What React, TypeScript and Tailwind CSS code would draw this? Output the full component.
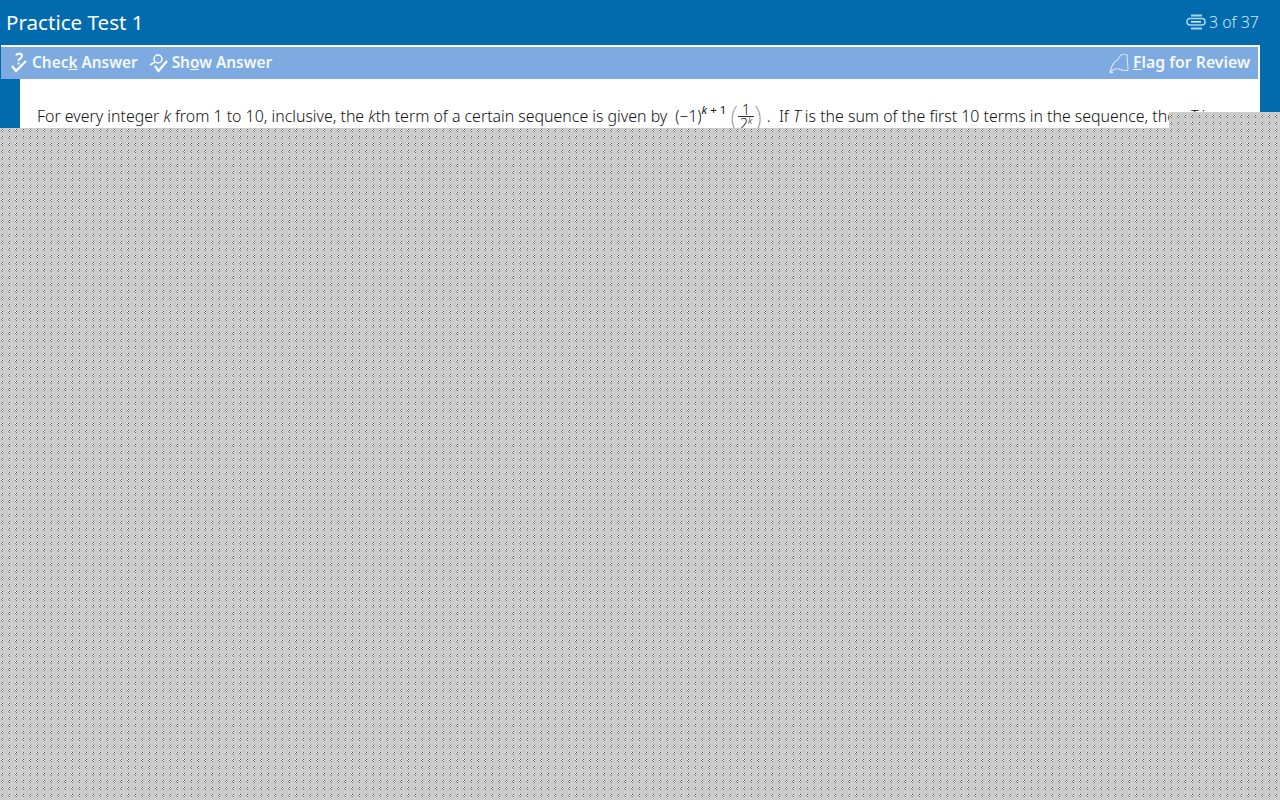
function CheckIcon() {
  return (
    <svg width="18" height="21" viewBox="0 0 18 21" fill="none" stroke="#fff" className="shrink-0">
      <path d="M6 3.500C7 1 12 1 12 4c0 2.500-3.500 2.500-3.500 5" strokeWidth="2" />
      <path d="M8.500 10.500v2" strokeWidth="2" />
      <path d="M2 14l4 5 10-10" strokeWidth="2.200" />
    </svg>
  );
}
function ShowIcon() {
  return (
    <svg width="19" height="20" viewBox="0 0 19 20" fill="none" stroke="#fff" className="shrink-0">
      <circle cx="9" cy="6" r="4" strokeWidth="1.500" />
      <path d="M6 9l-5 3" strokeWidth="1.500" />
      <path d="M6 13l3.500 5L18 8" strokeWidth="2.200" />
    </svg>
  );
}
function FlagIcon() {
  return (
    <svg width="20" height="21" viewBox="0 0 20 21" fill="none" stroke="#f2f6fb" strokeOpacity="0.8" strokeWidth="1.100" className="shrink-0">
      <path d="M1 19C2 15 4 10 7 8c2-1 3-4 5-6 2-1 5-1 6 0l1 15c-3 1-7 0-9-1-3-1-6 1-9 3z" />
      <path d="M1 19c1 1 2 1 3 0" />
    </svg>
  );
}
function ClipIcon() {
  return (
    <svg width="20" height="16" viewBox="0 0 20 16" fill="none" className="shrink-0">
      <path d="M5 1.500h11M5 14.500h11" stroke="#a8d6f5" strokeWidth="2" />
      <rect x="1" y="4.500" width="18" height="6.500" rx="3" stroke="#a8d6f5" strokeWidth="1.500" />
      <path d="M5 7.800h10" stroke="#e4f3fd" strokeWidth="1.500" />
    </svg>
  );
}
const dots =
  "bg-[#cccccc] bg-[radial-gradient(circle_at_2.5px_1.5px,#444_0.6px,transparent_0.7px),radial-gradient(circle_at_1.5px_2.5px,#777_0.6px,transparent_0.7px),radial-gradient(circle_at_2.5px_3.5px,#777_0.6px,transparent_0.7px),radial-gradient(circle_at_1.5px_1.5px,#fff_0.6px,transparent_0.7px),radial-gradient(circle_at_2.5px_2.5px,#fff_0.6px,transparent_0.7px)] bg-size-[7px_7px]";

export default function App() {
  return (
    <div className="relative h-[800px] w-[1280px] overflow-hidden bg-[#026bad] font-['Noto_Sans','Open_Sans',sans-serif]">
      <header className="flex h-[45px] items-center justify-between pb-[1px] pl-[6px] pr-[21px]">
        <h1 className="text-[20.6px] font-normal text-white">Practice Test 1</h1>
        <div className="flex items-center gap-[3px] text-[16px] font-light text-[#cfe6f6]">
          <ClipIcon />
          <span>3 of 37</span>
        </div>
      </header>
      <div className="ml-[1px] mr-[20px] flex h-[34px] items-center justify-between border-r-2 border-t-2 border-white bg-[#7dabe1] pl-[9px] pr-[8px] text-[15.4px] font-semibold text-[#f4f8fc]">
        <div className="flex items-center gap-[11px]">
          <span className="flex items-center gap-[4px]"><CheckIcon /><span>Chec<u>k</u> Answer</span></span>
          <span className="flex items-center gap-[4px]"><ShowIcon /><span>Sh<u>o</u>w Answer</span></span>
        </div>
        <span className="flex items-center gap-[4px] text-[15.8px]"><FlagIcon /><span><u>F</u>lag for Review</span></span>
      </div>
      <main className="mx-[20px] h-[49px] overflow-hidden bg-white pl-[17px] pt-[22px]">
        <p className="flex items-center whitespace-nowrap text-[15.9px] font-light leading-[26px] text-[#111]">
          <span>For every integer <i>k</i> from 1 to 10, inclusive, the <i>k</i>th term of a certain sequence is given by</span>
          <span className="ml-[8px] flex items-center text-[15.5px] font-light">
            <span>(−1)</span>
            <sup className="text-[11.5px] font-normal"><i>k</i> + 1</sup>
            <span className="ml-[4px] text-[30px] font-thin leading-none text-[#777]">(</span>
            <span className="flex flex-col items-center leading-[13px]">
              <span className="border-b border-[#333] px-[4px] text-[14px]">1</span>
              <span className="text-[14px]">2<sup className="text-[9px]"><i>k</i></sup></span>
            </span>
            <span className="text-[30px] font-thin leading-none text-[#777]">)</span>
          </span>
          <span className="ml-[5px]">.&nbsp; If <i>T</i> is the sum of the first 10 terms in the sequence, then <i>T</i> is</span>
        </p>
      </main>
      <div className={`absolute inset-x-0 bottom-0 top-[128px] ${dots}`} />
      <div className={`absolute right-0 top-[112px] h-[16px] w-[111px] bg-position-[0_2px] ${dots}`} />
    </div>
  );
}
